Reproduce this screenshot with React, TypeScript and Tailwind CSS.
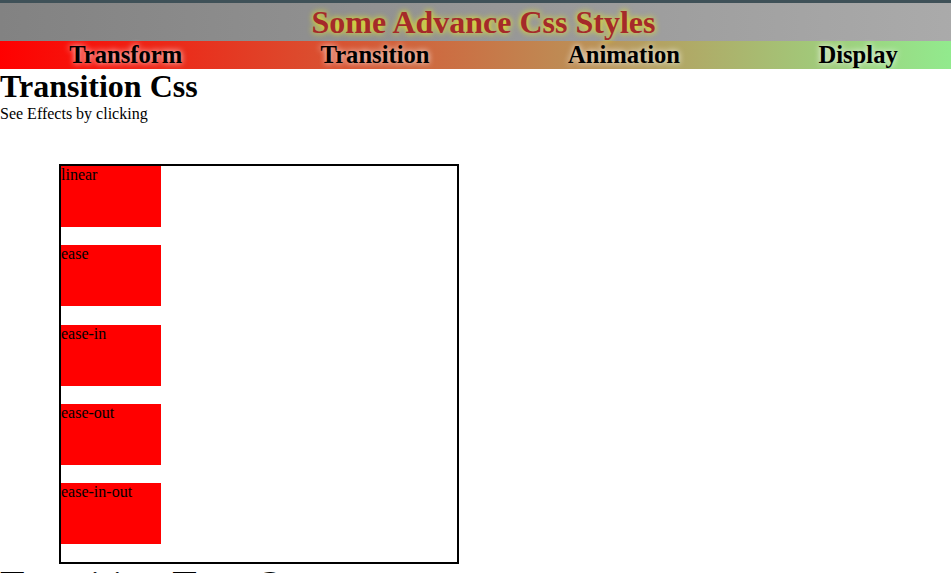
const timings = ["linear", "ease", "ease-in", "ease-out", "ease-in-out"];

const navItems = ["Transform", "Transition", "Animation", "Display"];

export default function App() {
  return (
    <div className="w-[951px] h-[573px] overflow-hidden bg-white font-['Liberation_Serif','Times_New_Roman',serif] text-black">
      <div className="w-[967px]">
        <div className="h-[3px] bg-[#3f5158]" />
        <header className="h-[38px] bg-[linear-gradient(to_right,#828282,#ababab)] text-center">
          <h1 className="pt-[1px] text-[32px] font-bold leading-[36px] text-[#a52a2a] [text-shadow:0_0_6px_#ffff00]">
            Some Advance Css Styles
          </h1>
        </header>
        <nav className="flex h-[28px] items-center justify-around bg-[linear-gradient(to_right,#ff0000,#90ee90)]">
          {navItems.map((item) => (
            <a
              key={item}
              className="text-[24.6px] font-bold leading-[28px] [text-shadow:0_0_6px_#ffffff]"
            >
              {item}
            </a>
          ))}
        </nav>
        <h2 className="text-[32px] font-bold leading-[35px]">Transition Css</h2>
        <p className="text-[16px] leading-[20px]">See Effects by clicking</p>
        <div className="ml-[59px] mt-[40px] h-[400px] w-[400px] border-2 border-black">
          {timings.map((t) => (
            <div
              key={t}
              className="mb-[18.3px] h-[61px] w-[100px] bg-[#ff0000] text-[16px] leading-[18px]"
            >
              {t}
            </div>
          ))}
        </div>
        <h2 className="mt-[1px] text-[40px] leading-[40px]">Transition Type 2</h2>
      </div>
    </div>
  );
}
